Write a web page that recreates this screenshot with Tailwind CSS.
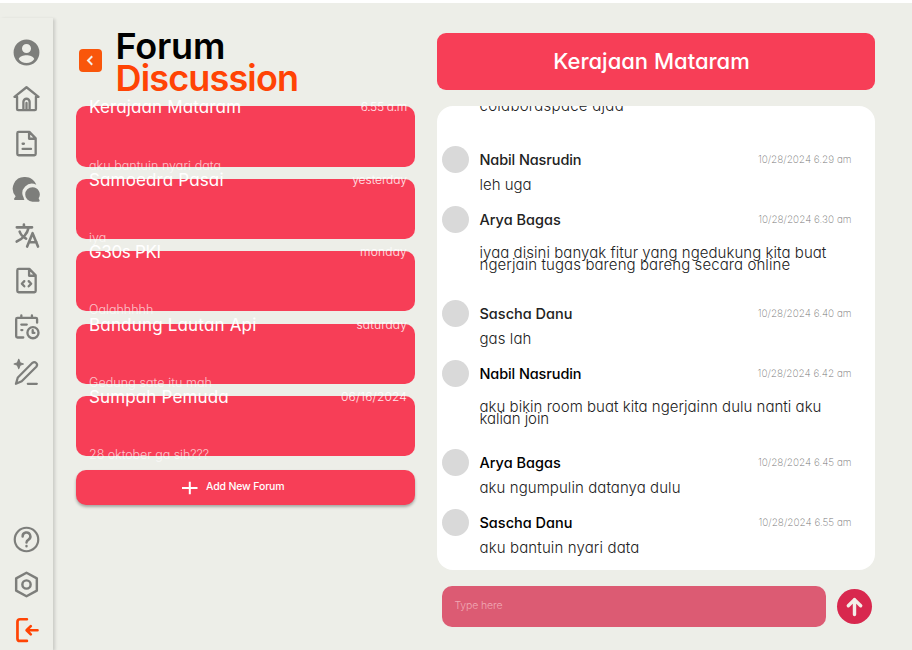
<!DOCTYPE html>
<html lang="id">
<head>
<meta charset="utf-8">
<title>Forum Discussion</title>
<script src="https://cdn.jsdelivr.net/npm/@tailwindcss/browser@4"></script>
</head>
<body class="h-[650px] w-[912px] overflow-hidden bg-[#edeee8] border-t-[3px] border-white font-['Inter',sans-serif] [font-feature-settings:'cv11'] whitespace-nowrap text-black">
<div class="flex h-full">

  <aside class="mt-[15px] flex w-[53px] shrink-0 flex-col justify-between pt-[19px] pb-[4px] shadow-[2px_1px_3px_rgba(0,0,0,0.15)] text-[#7d7e7b]">
    <nav class="flex flex-col items-center gap-[14.7px]">
      <svg class="size-[31px]" viewBox="0 0 24 24" fill="currentColor"><path fill-rule="evenodd" d="M12 2a10 10 0 1 0 0 20 10 10 0 0 0 0-20Zm0 3.400a3.500 3.500 0 1 1 0 7 3.500 3.500 0 0 1 0-7Zm0 14.800c-2.600 0-4.700-1.200-6-3.100.3-1.900 3.600-2.900 6-2.900s5.700 1 6 2.900c-1.300 1.900-3.400 3.100-6 3.100Z"/></svg>
      <svg class="size-[31px]" viewBox="0 0 24 24" fill="none" stroke="currentColor" stroke-width="1.800" stroke-linecap="round" stroke-linejoin="round"><path d="M2.700 10.700h1.500M21.300 10.700h-1.500M2.700 10.700 12 3.300l9.300 7.400M4.700 10.700v9.500q0 .8.8.8h13q.8 0 .8-.8v-9.500M9.600 21v-6.400a2.400 2.400 0 0 1 4.800 0V21M12 15.500v5.500"/></svg>
      <svg class="size-[31px]" viewBox="0 0 24 24" fill="none" stroke="currentColor" stroke-width="1.800" stroke-linecap="round" stroke-linejoin="round"><path d="M5.900 3h8.300l4.900 5v12.100q0 1-1 1H5.900q-1 0-1-1V4q0-1 1-1ZM14 3v5.300h5M9 12.200h1M9 16.200h6.500"/></svg>
      <svg class="size-[31px]" viewBox="0 0 24 24" fill="currentColor"><path d="M11 2.300c4 0 7.400 2.600 8.600 6.100A7.300 7.300 0 0 0 9.800 18.400q.2.900.6 1.700H3.200c-.8 0-1.100-.8-.6-1.300l1-1.600A9 9 0 0 1 11 2.300Z"/><path d="M16.600 10.200a5.600 5.600 0 0 1 4.800 8.600l.7 1.500c.2.500-.1 1.100-.7 1.100h-4.800a5.600 5.600 0 1 1 0-11.200Z"/></svg>
      <svg class="size-[31px]" viewBox="0 0 24 24" fill="none" stroke="currentColor" stroke-width="2" stroke-linecap="round" stroke-linejoin="round"><path d="M4.500 5.700h11.800M10 3.500v2M13.600 6c-.9 4.600-4.700 8.900-9.200 10.700M6.700 9c.8 2.300 2.700 4.300 5 5.500M12.500 20.600l4.200-10.400 4.200 10.400M13.800 17.200h6"/></svg>
      <svg class="size-[31px]" viewBox="0 0 24 24" fill="none" stroke="currentColor" stroke-width="1.800" stroke-linecap="round" stroke-linejoin="round"><path d="M5.900 3h8.300l4.900 5v12.100q0 1-1 1H5.900q-1 0-1-1V4q0-1 1-1ZM14 3v5.300h5M10.300 12.500 8.400 14.500l1.900 2M13.700 12.500l1.900 2-1.900 2"/></svg>
      <svg class="size-[31px]" viewBox="0 0 24 24" fill="none" stroke="currentColor" stroke-width="1.800" stroke-linecap="round" stroke-linejoin="round"><path d="M9.500 20.500H5q-1 0-1-1V6.300q0-1 1-1h14.200q1 0 1 1V9M8 3.500v1.800M16.200 3.500v1.800M8 10.500h4.200M8 14.800h.8"/><circle cx="17" cy="16.800" r="4.300"/><path d="M16.800 14.900v2.100h1.300"/></svg>
      <svg class="size-[31px]" viewBox="0 0 24 24" fill="none" stroke="currentColor" stroke-width="1.700" stroke-linecap="round" stroke-linejoin="round"><path d="M3.800 20.800l1.500-5L16.600 4.500q1.500-1.200 2.900.1t.1 2.900L8.300 18.800ZM13 20.800h7"/><path fill="currentColor" stroke-width=".9" d="M6 1.800l1 2.600L9.600 5.400l-2.600 1L6 9l-1-2.600-2.600-1 2.600-1Z"/></svg>
    </nav>
    <nav class="flex flex-col items-center gap-[14.700px]">
      <svg class="size-[31px]" viewBox="0 0 24 24" fill="none" stroke="currentColor" stroke-width="1.700" stroke-linecap="round" stroke-linejoin="round"><circle cx="12" cy="12" r="9.100"/><path stroke-width="1.900" d="M9 9.700a3 3 0 1 1 4.600 2.400c-1.100.7-1.600 1.100-1.600 2.200M12 17.100v.1"/></svg>
      <svg class="size-[31px]" viewBox="0 0 24 24" fill="none" stroke="currentColor" stroke-width="1.900" stroke-linejoin="round"><path d="M12 2.900 20 7.300v9.400l-8 4.400-8-4.400V7.300Z"/><circle cx="12" cy="12" r="3.200"/></svg>
      <svg class="size-[31px] text-[#ff4405]" viewBox="0 0 24 24" fill="none" stroke="currentColor" stroke-width="2.100" stroke-linecap="round" stroke-linejoin="round"><path d="M12.300 3.300H7Q5 3.300 5 5.300v12.800q0 2 2 2h5.300M20.500 11.800h-8M15.300 8.600l-3.200 3.200 3.200 3.200"/></svg>
    </nav>
  </aside>

  <section class="ml-[22.500px] w-[339.500px] shrink-0 pt-[28px]">
    <header class="flex h-[75.400px] items-start">
      <button class="mt-[18px] ml-[3.500px] grid size-[23px] place-items-center rounded-[4px] bg-[#f9560b]">
        <svg class="size-[23px]" viewBox="0 0 23 23" fill="none" stroke="#f3eee8" stroke-width="2"><path d="M13.200 7.200 9 11.500l4.200 4.300"/></svg>
      </button>
      <h1 class="-mt-px ml-[13.500px] text-[36px] leading-[32px] font-semibold"><span class="block tracking-[-0.200px]">Forum</span><span class="block tracking-[-0.850px] text-[#ff4405]">Discussion</span></h1>
    </header>

    <ul class="flex flex-col gap-[12.100px] text-white">
      <li class="flex h-[60.300px] flex-col justify-between rounded-[10px] bg-[#f73e57] pt-px pr-[8px] pb-px pl-[13.500px]">
        <div class="flex justify-between leading-[0px]"><span class="text-[17px] tracking-[0.140px]">Kerajaan Mataram</span><span class="text-[12px] font-light text-white/90 tracking-[-0.300px]">6.55 a.m</span></div>
        <p class="text-[12.500px] leading-[0px] font-light text-white/70 tracking-[0.050px]">aku bantuin nyari data</p>
      </li>
      <li class="flex h-[60.300px] flex-col justify-between rounded-[10px] bg-[#f73e57] pt-px pr-[8px] pb-px pl-[13.500px]">
        <div class="flex justify-between leading-[0px]"><span class="text-[17px] tracking-[0.140px]">Samoedra Pasai</span><span class="text-[12px] font-light text-white/90 tracking-[-0.050px]">yesterday</span></div>
        <p class="text-[12.500px] leading-[0px] font-light text-white/70">iya</p>
      </li>
      <li class="flex h-[60.300px] flex-col justify-between rounded-[10px] bg-[#f73e57] pt-px pr-[8px] pb-px pl-[13.500px]">
        <div class="flex justify-between leading-[0px]"><span class="text-[17px] tracking-[-0.350px]">G30s PKI</span><span class="text-[12px] font-light text-white/90 tracking-[0.200px]">monday</span></div>
        <p class="text-[12.500px] leading-[0px] font-light text-white/70">Oalahhhhh</p>
      </li>
      <li class="flex h-[60.300px] flex-col justify-between rounded-[10px] bg-[#f73e57] pt-px pr-[8px] pb-px pl-[13.500px]">
        <div class="flex justify-between leading-[0px]"><span class="text-[17px] tracking-[0.180px]">Bandung Lautan Api</span><span class="text-[12px] font-light text-white/90 tracking-[0.150px]">saturday</span></div>
        <p class="text-[12.500px] leading-[0px] font-light text-white/70 tracking-[0.080px]">Gedung sate itu mah</p>
      </li>
      <li class="flex h-[60.300px] flex-col justify-between rounded-[10px] bg-[#f73e57] pt-px pr-[8px] pb-px pl-[13.500px]">
        <div class="flex justify-between leading-[0px]"><span class="text-[17px] tracking-[0.140px]">Sumpah Pemuda</span><span class="text-[12px] font-light text-white/90 tracking-[0.150px]">06/16/2024</span></div>
        <p class="text-[12.500px] leading-[0px] font-light text-white/70 tracking-[-0.040px]">28 oktober ga sih???</p>
      </li>
    </ul>

    <button class="mt-[14px] flex h-[34.800px] w-full items-center rounded-[10px] bg-[#f73e57] pl-[105px] text-white shadow-[0_2px_3px_rgba(0,0,0,0.3)]">
      <svg class="size-[17px]" viewBox="0 0 17 17" fill="none" stroke="currentColor" stroke-width="2"><path d="M1 9h15.500M8.800 2.700v12.500"/></svg>
      <span class="mb-[1px] ml-[8.500px] text-[10.500px] font-medium tracking-[-0.160px]">Add New Forum</span>
    </button>
  </section>

  <main class="ml-[22px] w-[438px] shrink-0 pt-[29.500px]">
    <h2 class="flex h-[57px] items-center justify-center rounded-[9px] bg-[#f73e57] pr-[9px] text-[22px] font-medium text-white">Kerajaan Mataram</h2>

    <div class="mt-[16.700px] h-[463.500px] overflow-hidden rounded-[16px] bg-white pr-[23.500px] pl-[5px] text-[15px] font-light text-[#222]">
      <p class="-mt-[6px] h-[45.500px] pl-[37.500px] leading-[12px] tracking-[0.270px]">colaboraspace ajaa</p>
      <article class="h-[60px]">
        <div class="flex h-[27px] items-center"><i class="size-[27px] rounded-full bg-[#d9d9d9]"></i><b class="mt-px ml-[10.500px] text-[14.500px] font-medium tracking-[-0.110px]">Nabil Nasrudin</b><time class="ml-auto text-[10px] font-extralight text-[#777]">10/28/2024 6.29 am</time></div>
        <p class="mt-[6px] pl-[37.500px] leading-[12px]">leh uga</p>
      </article>
      <article class="h-[94px]">
        <div class="flex h-[27px] items-center"><i class="size-[27px] rounded-full bg-[#d9d9d9]"></i><b class="mt-px ml-[10.500px] text-[14.500px] font-medium">Arya Bagas</b><time class="ml-auto text-[10px] font-extralight text-[#777]">10/28/2024 6.30 am</time></div>
        <p class="mt-[14px] pl-[37.500px] leading-[12px]"><span class="tracking-[0.050px]">iyaa disini banyak fitur yang ngedukung kita buat</span><br><span class="tracking-[0.090px]">ngerjain tugas bareng bareng secara online</span></p>
      </article>
      <article class="h-[60px]">
        <div class="flex h-[27px] items-center"><i class="size-[27px] rounded-full bg-[#d9d9d9]"></i><b class="mt-px ml-[10.500px] text-[14.500px] font-medium">Sascha Danu</b><time class="ml-auto text-[10px] font-extralight text-[#777]">10/28/2024 6.40 am</time></div>
        <p class="mt-[6px] pl-[37.500px] leading-[12px] tracking-[0.080px]">gas lah</p>
      </article>
      <article class="h-[89.500px]">
        <div class="flex h-[27px] items-center"><i class="size-[27px] rounded-full bg-[#d9d9d9]"></i><b class="mt-px ml-[10.500px] text-[14.500px] font-medium tracking-[-0.110px] text-black">Nabil Nasrudin</b><time class="ml-auto text-[10px] font-extralight text-[#777]">10/28/2024 6.42 am</time></div>
        <p class="mt-[14px] pl-[37.500px] leading-[12px]"><span class="tracking-[0.020px]">aku bikin room buat kita ngerjainn dulu nanti aku</span><br><span class="tracking-[-0.080px]">kalian join</span></p>
      </article>
      <article class="h-[60px]">
        <div class="flex h-[27px] items-center"><i class="size-[27px] rounded-full bg-[#d9d9d9]"></i><b class="mt-px ml-[10.500px] text-[14.500px] font-medium text-black">Arya Bagas</b><time class="ml-auto text-[10px] font-extralight text-[#777]">10/28/2024 6.45 am</time></div>
        <p class="mt-[6px] pl-[37.500px] leading-[12px] tracking-[0.070px]">aku ngumpulin datanya dulu</p>
      </article>
      <article class="h-[40px]">
        <div class="flex h-[27px] items-center"><i class="size-[27px] rounded-full bg-[#d9d9d9]"></i><b class="mt-px ml-[10.500px] text-[14.500px] font-medium text-black">Sascha Danu</b><time class="ml-auto text-[10px] font-extralight text-[#777]">10/28/2024 6.55 am</time></div>
        <p class="mt-[6px] pl-[37.500px] leading-[12px] tracking-[0.130px]">aku bantuin nyari data</p>
      </article>
    </div>

    <div class="mt-[16.300px] flex items-center pl-[5px]">
      <div class="flex h-[41.500px] w-[384px] items-center rounded-[10px] bg-[#dc5b73] pb-[2px] pl-[12.500px] text-[10.500px] font-light tracking-[-0.150px] text-[#f0a9b5]">Type here</div>
      <button class="ml-[11px] grid size-[35px] place-items-center rounded-full bg-[#d8284e]">
        <svg class="size-[35px]" viewBox="0 0 35 35" fill="none" stroke="#f3eee8" stroke-width="3.400" stroke-linecap="round" stroke-linejoin="round"><path d="M17.500 25.500V10.500M11.300 16.800l6.200-6.200 6.200 6.200"/></svg>
      </button>
    </div>
  </main>
</div>
</body>
</html>
